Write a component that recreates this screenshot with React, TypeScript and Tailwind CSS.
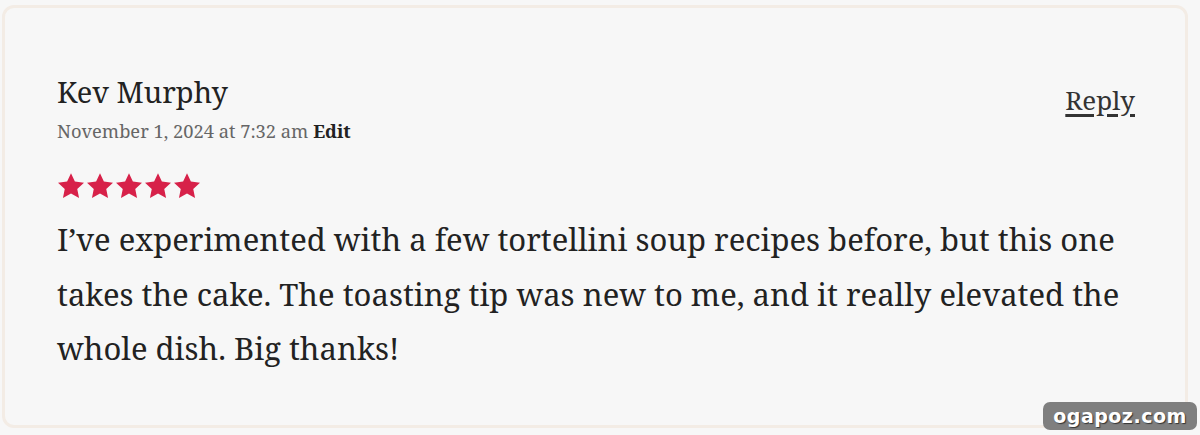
function Star() {
  return (
    <svg viewBox="1.2 1.6 21.6 20.4" className="w-[28px] h-[26px]" fill="#d72149">
      <path d="M12 1.8l3.05 6.55 7.15.85-5.3 4.9 1.42 7.08L12 17.6l-6.32 3.58 1.42-7.08-5.3-4.9 7.15-.85z" />
    </svg>
  );
}

export default function App() {
  return (
    <div className="w-[1200px] h-[435px] bg-[#f7f7f7] pt-[5px] pl-[2px] font-['Noto_Serif',serif] text-[#222] relative">
      <div className="w-[1186px] h-[423px] border-[3px] border-[#f3ece5] rounded-[12px] pl-[52px] pr-[50px] pt-[64px]">
        <div className="flex justify-between items-start">
          <div>
            <div className="text-[29px] leading-[40px] text-[#222]">Kev Murphy</div>
            <div className="text-[18.3px] leading-[26px] mt-[6px] text-[#666]">
              November 1, 2024 at 7:32 am <span className="font-bold text-[#222]">Edit</span>
            </div>
          </div>
          <a href="#" className="text-[26px] leading-[32px] mt-[12px] text-[#333] underline decoration-[2.5px] underline-offset-[4px]">
            Reply
          </a>
        </div>
        <div className="flex gap-[1px] mt-[29px]">
          <Star />
          <Star />
          <Star />
          <Star />
          <Star />
        </div>
        <p className="text-[31px] leading-[54.5px] text-[#222] mt-[13px] w-[1090px]">
          I’ve experimented with a few tortellini soup recipes before, but this one takes the cake. The toasting tip was new to me, and it really elevated the whole dish. Big thanks!
        </p>
      </div>
      <div className="absolute left-[1043px] top-[402px] w-[154px] h-[28px] rounded-[7px] bg-[#7f7f7f] flex items-center justify-center">
        <span className="font-['DejaVu_Sans',sans-serif] font-bold text-[19px] leading-none text-white tracking-[0.5px] [text-shadow:1px_1px_1px_#333]">ogapoz.com</span>
      </div>
    </div>
  );
}
